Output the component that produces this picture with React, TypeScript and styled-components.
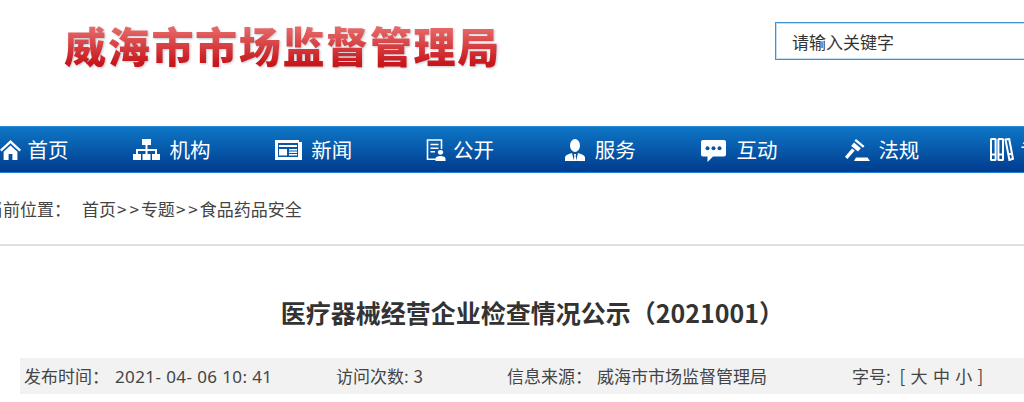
import React from "react";
import styled, { createGlobalStyle } from "styled-components";

const Global = createGlobalStyle`
  html, body { margin: 0; padding: 0; background: #fff; }
  body { font-family: "Noto Sans", "Noto Sans CJK SC", sans-serif; }
`;

const Page = styled.div`
  width: 1024px;
  height: 402px;
  overflow: hidden;
  color: #333;
  font-family: "Noto Sans", "Noto Sans CJK SC", sans-serif;
`;

const Header = styled.header`
  height: 126px;
  display: flex;
  align-items: flex-start;
  justify-content: space-between;
`;

const Logo = styled.h1`
  margin: 16px 0 0 64px;
  font: 900 42px/58px "Noto Sans CJK SC", sans-serif;
  letter-spacing: 1.7px;
  white-space: nowrap;
  color: transparent;
  background: linear-gradient(#e66a6a 20%, #c8161b 82%);
  -webkit-background-clip: text;
  background-clip: text;
  filter: drop-shadow(1.5px 1.5px 1px rgba(100, 110, 130, 0.4));
`;

const Search = styled.div`
  width: 261px;
  height: 38px;
  margin: 22px -12px 0 0;
  box-sizing: border-box;
  border: 1px solid #3f93d3;
  box-shadow: inset 0 0 0 1px rgba(79, 159, 220, 0.35);
  padding-left: 16px;
  font: 400 17px/37px "Noto Sans CJK SC", sans-serif;
  color: #333;
`;

const Nav = styled.nav`
  height: 47px;
  box-sizing: border-box;
  border-top: 1px solid #2b8ad8;
  border-bottom: 1px solid #1f7fd6;
  background: linear-gradient(#0f76c6, #003b8e);
  display: flex;
  overflow: hidden;
`;

const NavTrack = styled.ul`
  margin: 0 0 0 -9px;
  padding: 0;
  list-style: none;
  display: flex;
  flex: none;
`;

const NavItem = styled.li`
  width: 141.8px;
  flex: none;
  display: flex;
  align-items: center;
`;

const IconSlot = styled.span`
  width: 36px;
  height: 28px;
  display: flex;
  align-items: center;
  justify-content: flex-end;
  padding-right: ${(p) => p.$gap}px;
  box-sizing: border-box;
  flex: none;
`;

const NavLabel = styled.span`
  font: 400 20.5px/28px "Noto Sans CJK SC", sans-serif;
  color: #fff;
  white-space: nowrap;
  margin: -2px 0 0 0.6px;
`;

const Crumbs = styled.div`
  height: 73px;
  box-sizing: border-box;
  border-bottom: 2px solid #e0e0e0;
  padding-top: 24px;
  display: flex;
  margin-left: -14px;
  font: 400 17px/24px "Noto Sans CJK SC", sans-serif;
  color: #444;
  white-space: nowrap;
`;

const CrumbLabel = styled.span`
  width: 96px;
  flex: none;
`;

const CrumbSep = styled.span`
  letter-spacing: 3px;
  margin: 0 -1px 0 1px;
`;

const Title = styled.h2`
  margin: 49px 0 0;
  padding-left: 41px;
  text-align: center;
  font: 700 25px/34px "Noto Sans CJK SC", "Noto Sans", sans-serif;
  color: #333;
  white-space: nowrap;
`;

const Meta = styled.div`
  margin: 29px 0 0 20px;
  height: 36px;
  box-sizing: border-box;
  background: #f2f2f2;
  display: flex;
  align-items: center;
  font: 400 17px/34px "Noto Sans CJK SC", sans-serif;
  color: #444;
  white-space: nowrap;
`;

const MetaCell = styled.span`
  flex: none;
  width: ${(p) => p.$w}px;
  padding-left: ${(p) => p.$pad || 0}px;
  box-sizing: border-box;
`;

const Value = styled.span`
  margin-left: ${(p) => p.$gap || 0}px;
  word-spacing: ${(p) => p.$words || 0}px;
`;

const Stamp = styled(Value)`
  font-family: "Noto Sans", sans-serif;
  letter-spacing: 0.4px;
`;

const Home = () => (
  <svg width="21" height="21" viewBox="0 0 21 21" fill="#fff">
    <path d="M10.5 1 L0 10.8 1.5 12.4 10.5 4.2 19.5 12.4 21 10.8Z" />
    <path d="M10.5 6.5 L3.6 12.8V21H8.6V15H12.4V21H17.4V12.8Z" />
  </svg>
);

const Org = () => (
  <svg width="27" height="21" viewBox="0 0 27 21" fill="#fff">
    <path d="M9 0H18V6H9Z" />
    <path d="M12.5 6H14.5V10H24V15H22V12H14.5V15H12.5V12H5V15H3V10H12.5Z" />
    <path d="M0 15H8V21H0ZM9.5 15H17.5V21H9.5ZM19 15H27V21H19Z" />
  </svg>
);

const News = () => (
  <svg width="27" height="20" viewBox="0 0 27 20" fill="none">
    <path d="M0 0H24V2H27V20H0Z" fill="#fff" />
    <path d="M3 3H23V17H3Z" fill="#0a57a8" />
    <path d="M4 5H22V7H4ZM4 9H12V15.5H4ZM14 9H22V10.5H14ZM14 11.6H22V13H14ZM14 14H22V15.5H14Z" fill="#fff" />
  </svg>
);

const Doc = () => (
  <svg width="20" height="22" viewBox="0 0 20 24" preserveAspectRatio="none" fill="none">
    <path d="M11 22H1.5V1H15.5V11" stroke="#fff" strokeWidth="1.6" />
    <path d="M4.5 6H12.5M4.5 10H12.5M4.5 14H9" stroke="#fff" strokeWidth="1.6" />
    <circle cx="14.5" cy="14.5" r="2.6" fill="#fff" />
    <path d="M9.5 24V21.5C9.5 19.5 11.5 18.5 14.5 18.5S19.5 19.5 19.5 21.5V24Z" fill="#fff" />
  </svg>
);

const Person = () => (
  <svg width="20" height="22" viewBox="0 0 20 22" fill="#fff">
    <ellipse cx="10" cy="6.5" rx="5" ry="6.5" />
    <path d="M0 22V18.5C0 16 4 15 7 14L9 22ZM20 22V18.5C20 16 16 15 13 14L11 22Z" />
    <path d="M9 15H11L10.7 17 11.3 22H8.7L9.3 17Z" />
  </svg>
);

const Chat = () => (
  <svg width="25" height="25" viewBox="0 0 25 25">
    <path d="M2 3H23C24.2 3 25 3.8 25 5V17.5C25 18.7 24.2 19.5 23 19.5H12L6.5 25V19.5H2C.8 19.5 0 18.7 0 17.5V5C0 3.8.8 3 2 3Z" fill="#fff" />
    <circle cx="6.5" cy="11.3" r="2" fill="#0a55a6" />
    <circle cx="12.5" cy="11.3" r="2" fill="#0a55a6" />
    <circle cx="18.5" cy="11.3" r="2" fill="#0a55a6" />
  </svg>
);

const Gavel = () => (
  <svg width="25" height="22" viewBox="0 0 25 22" fill="#fff">
    <path d="M11 0 L19.5 7 L18 8.8 L9.5 1.8Z" />
    <path d="M9 3.6 L15.8 9.2 L13 12.6 L6.2 7Z" />
    <path d="M7 9.4 L9.8 11.6 L2.4 20 L0 17.8Z" />
    <path d="M11 18.5H22.5L25 22H9Z" />
  </svg>
);

const Books = () => (
  <svg width="24" height="23" viewBox="0 0 24 23" fill="none" stroke="#fff" strokeWidth="2">
    <rect x="1" y="1" width="4.6" height="21" rx=".6" />
    <rect x="8.4" y="1" width="4.6" height="21" rx=".6" />
    <path d="M15.5 1.6L19.2 1 23 20.8 19.4 22Z" />
    <path d="M1 16.5H5.6M8.4 16.5H13M18 16.5L22 15.6" />
  </svg>
);

const items = [
  { label: "首页", Icon: Home, gap: 6 },
  { label: "机构", Icon: Org, gap: 9 },
  { label: "新闻", Icon: News, gap: 9 },
  { label: "公开", Icon: Doc, gap: 6 },
  { label: "服务", Icon: Person, gap: 9 },
  { label: "互动", Icon: Chat, gap: 10 },
  { label: "法规", Icon: Gavel, gap: 8 },
  { label: "专题", Icon: Books, gap: 6 },
];

export default function App() {
  return (
    <Page>
      <Global />
      <Header>
        <Logo>威海市市场监督管理局</Logo>
        <Search>请输入关键字</Search>
      </Header>
      <Nav>
        <NavTrack>
          {items.map(({ label, Icon, gap }) => (
            <NavItem key={label}>
              <IconSlot $gap={gap}>
                <Icon />
              </IconSlot>
              <NavLabel>{label}</NavLabel>
            </NavItem>
          ))}
        </NavTrack>
      </Nav>
      <Crumbs>
        <CrumbLabel>当前位置：</CrumbLabel>
        <span>
          首页<CrumbSep>&gt;&gt;</CrumbSep>专题<CrumbSep>&gt;&gt;</CrumbSep>食品药品安全
        </span>
      </Crumbs>
      <Title>医疗器械经营企业检查情况公示（2021001）</Title>
      <Meta>
        <MetaCell $w={316} $pad={4}>
          发布时间：<Stamp $gap={6}>2021- 04- 06 10: 41</Stamp>
        </MetaCell>
        <MetaCell $w={171}>
          访问次数: <Value $gap={1}>3</Value>
        </MetaCell>
        <MetaCell $w={345}>
          信息来源：<Value $gap={5}>威海市市场监督管理局</Value>
        </MetaCell>
        <MetaCell $w={180}>
          字号: <Value $gap={5} $words={1.5}>[ 大 中 小 ]</Value>
        </MetaCell>
      </Meta>
    </Page>
  );
}
